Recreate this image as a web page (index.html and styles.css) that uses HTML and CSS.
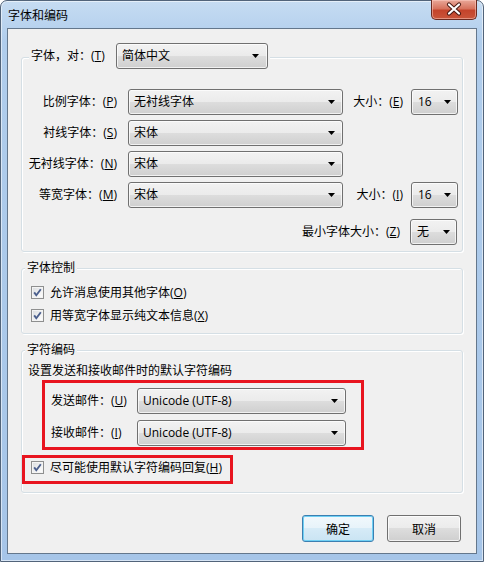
FILE: index.html
```html
<!DOCTYPE html>
<html lang="zh-CN">
<head>
  <meta charset="UTF-8">
  <meta name="viewport" content="width=device-width, initial-scale=1.0">
  <title>字体和编码</title>
  <link rel="stylesheet" href="styles.css">
</head>
<body>
  <div class="window">
    <div class="titlebar">
      <span class="title">字体和编码</span>
      <div class="close">
        <svg width="46" height="20" viewBox="0 0 46 20">
          <path d="M18 5.5 L28 14.5 M28 5.5 L18 14.5" stroke="#4a1a12" stroke-width="4.2" stroke-linecap="round"/>
          <path d="M18 5.5 L28 14.5 M28 5.5 L18 14.5" stroke="#ffffff" stroke-width="2.2" stroke-linecap="round"/>
        </svg>
      </div>
    </div>

    <div class="client">
      <div class="group group-fonts">
        <div class="group-head head-lang">
          <span class="head-lbl">字体，对：(<u>T</u>)</span>
          <div class="combo combo-lang">简体中文</div>
        </div>

        <div class="row row-first">
          <span class="lbl">比例字体：(<u>P</u>)</span>
          <div class="combo combo-font">无衬线字体</div>
          <span class="size-lbl">大小：(<u>E</u>)</span>
          <div class="combo combo-size">16</div>
        </div>
        <div class="row">
          <span class="lbl">衬线字体：(<u>S</u>)</span>
          <div class="combo combo-font">宋体</div>
        </div>
        <div class="row">
          <span class="lbl">无衬线字体：(<u>N</u>)</span>
          <div class="combo combo-font">宋体</div>
        </div>
        <div class="row">
          <span class="lbl">等宽字体：(<u>M</u>)</span>
          <div class="combo combo-font">宋体</div>
          <span class="size-lbl">大小：(<u>I</u>)</span>
          <div class="combo combo-size">16</div>
        </div>
        <div class="row row-min">
          <span class="min-lbl">最小字体大小：(<u>Z</u>)</span>
          <div class="combo combo-size">无</div>
        </div>
      </div>

      <div class="group group-ctrl">
        <div class="group-head">字体控制</div>
        <div class="check-row check-first">
          <span class="check"><svg width="11" height="11" viewBox="0 0 11 11"><path d="M2.2 5.4 L4.3 8.2 L8.8 2.2" fill="none" stroke="#4b5f8d" stroke-width="1.9"/></svg></span>
          允许消息使用其他字体(<u>O</u>)
        </div>
        <div class="check-row">
          <span class="check"><svg width="11" height="11" viewBox="0 0 11 11"><path d="M2.2 5.4 L4.3 8.2 L8.8 2.2" fill="none" stroke="#4b5f8d" stroke-width="1.9"/></svg></span>
          用等宽字体显示纯文本信息(<u>X</u>)
        </div>
      </div>

      <div class="group group-enc">
        <div class="group-head">字符编码</div>
        <div class="desc">设置发送和接收邮件时的默认字符编码</div>
        <div class="mark mark-enc">
          <div class="enc-row">
            <span class="enc-lbl">发送邮件：(<u>U</u>)</span>
            <div class="combo combo-enc">Unicode (UTF-8)</div>
          </div>
          <div class="enc-row">
            <span class="enc-lbl">接收邮件：(<u>I</u>)</span>
            <div class="combo combo-enc">Unicode (UTF-8)</div>
          </div>
        </div>
        <div class="mark mark-reply">
          <div class="check-row">
            <span class="check"><svg width="11" height="11" viewBox="0 0 11 11"><path d="M2.2 5.4 L4.3 8.2 L8.8 2.2" fill="none" stroke="#4b5f8d" stroke-width="1.9"/></svg></span>
            尽可能使用默认字符编码回复(<u>H</u>)
          </div>
        </div>
      </div>

      <div class="buttons">
        <button class="btn btn-ok">确定</button>
        <button class="btn btn-cancel">取消</button>
      </div>
    </div>
  </div>
</body>
</html>
```

FILE: styles.css
```css
* {
  box-sizing: border-box;
}
body {
  margin: 0;
  font-family: "Open Sans", "Noto Sans CJK SC", sans-serif;
  font-size: 12px;
  line-height: 16px;
  color: #000000;
}
u {
  text-decoration: underline;
  text-underline-offset: 1px;
}
.window {
  width: 484px;
  height: 562px;
  border: 1px solid #52647a;
  border-radius: 7px 7px 0 0;
  background: linear-gradient(#c6dcf2, #b0cdec 40px, #a6c5e8);
  box-shadow: inset 0 0 0 1px rgba(255, 255, 255, 0.55);
  display: flex;
  flex-direction: column;
}
.titlebar {
  height: 27px;
  display: flex;
  align-items: flex-start;
  justify-content: space-between;
  padding-left: 7px;
}
.title {
  margin-top: 7px;
}
.close {
  width: 46px;
  height: 20px;
  margin: -1px 6px 0 0;
  border: 1px solid #6b2a20;
  border-top: 0;
  border-radius: 0 0 5px 5px;
  background: linear-gradient(#e9a899, #d7735e 45%, #c4442b 55%, #c9553a);
  box-shadow: inset 0 0 0 1px rgba(255, 210, 200, 0.5);
}
.close svg {
  display: block;
  margin: -1px 0 0 -1px;
}
.client {
  flex: 1;
  margin: 0 6px 7px 6px;
  border: 1px solid #64778c;
  background: #f0f0f0;
  display: flex;
  flex-direction: column;
}
.group {
  margin: 16px 13px 0;
  border: 1px solid #d5dfe5;
  border-radius: 3px;
  box-shadow: inset 1px 1px 0 #ffffff, 1px 1px 0 #ffffff;
}
.group-fonts {
  margin-top: 28px;
  padding-bottom: 6px;
}
.group-head {
  width: fit-content;
  margin: -9px 0 0 3px;
  padding: 0 2px;
  background: #f0f0f0;
}
.head-lang {
  display: flex;
  align-items: center;
  margin: -15px 0 0 7px;
}
.head-lbl {
  width: 74px;
  margin-right: 11px;
}

/* drop-down boxes */
.combo {
  position: relative;
  height: 26px;
  display: flex;
  align-items: center;
  padding: 0 18px 0 5px;
  border: 1px solid #707070;
  border-radius: 3px;
  background: linear-gradient(#f2f2f2, #ebebeb 50%, #dddddd 50%, #cfcfcf);
  box-shadow: inset 0 0 0 1px rgba(255, 255, 255, 0.7);
  white-space: nowrap;
}
.combo::after {
  content: "";
  position: absolute;
  right: 7px;
  top: 10px;
  width: 7px;
  height: 4px;
  background: #000000;
  clip-path: polygon(0 0, 100% 0, 50% 100%);
}
.combo-lang {
  width: 152px;
}
.combo-lang::after {
  right: 8px;
}
.combo-font {
  width: 215px;
}
.combo-size {
  width: 47px;
  padding-left: 6px;
}
.combo-size::after {
  right: 6px;
}
.combo-enc {
  width: 209px;
}

/* font rows */
.row {
  display: flex;
  align-items: center;
  height: 26px;
  margin-top: 5px;
  padding-right: 4px;
}
.row-first {
  margin-top: 20px;
}
.row-min {
  margin-top: 11px;
  justify-content: flex-end;
  padding-right: 5px;
}
.lbl {
  width: 95px;
  margin-right: 11px;
  text-align: right;
}
.size-lbl {
  margin-left: auto;
  margin-right: 8px;
}
.min-lbl {
  margin-right: 10px;
}

/* checkboxes */
.group-ctrl {
  padding-bottom: 9px;
}
.check-row {
  display: flex;
  align-items: center;
  height: 17px;
  margin-top: 6px;
  padding-left: 9px;
}
.check-first {
  margin-top: 8px;
}
.check {
  width: 13px;
  height: 13px;
  margin-right: 6px;
  border: 1px solid #8e8f8f;
  background: linear-gradient(135deg, #d9dcdf, #f6f6f6 70%, #ffffff);
  box-shadow: inset 0 0 0 1px #f4f4f4;
}
.check svg {
  display: block;
}

/* encoding */
.group-enc {
  padding-bottom: 8px;
}
.desc {
  margin-top: 4px;
  padding-left: 6px;
  line-height: 17px;
}
.mark {
  border: 3px solid #e8141f;
}
.mark-enc {
  width: 322px;
  margin: 1px 0 0 20px;
  padding: 5px 0 1px 6px;
}
.enc-row {
  display: flex;
  align-items: center;
  margin-bottom: 6px;
}
.enc-row:last-child {
  margin-bottom: 0;
}
.enc-lbl {
  width: 86px;
}
.mark-reply {
  width: 211px;
  margin-top: 5px;
  padding: 1px 0 5px;
}
.mark-reply .check-row {
  margin-top: 0;
  padding-left: 6px;
}

/* buttons */
.buttons {
  margin-top: auto;
  display: flex;
  justify-content: flex-end;
  gap: 13px;
  padding: 0 15px 11px 0;
}
.btn {
  height: 27px;
  font-family: inherit;
  font-size: 12px;
  color: #000000;
  border: 1px solid #707070;
  border-radius: 3px;
  background: linear-gradient(#f2f2f2, #ebebeb 50%, #dddddd 50%, #cfcfcf);
  box-shadow: inset 0 0 0 1px rgba(255, 255, 255, 0.75);
  padding: 0;
}
.btn-ok {
  width: 72px;
  border-color: #3c7fb1;
  background: linear-gradient(#f1f8fc, #e7f3fa 50%, #d6ebf7 50%, #cae4f3);
  box-shadow: inset 0 0 0 1px #6fd0f4;
}
.btn-cancel {
  width: 74px;
}
```
